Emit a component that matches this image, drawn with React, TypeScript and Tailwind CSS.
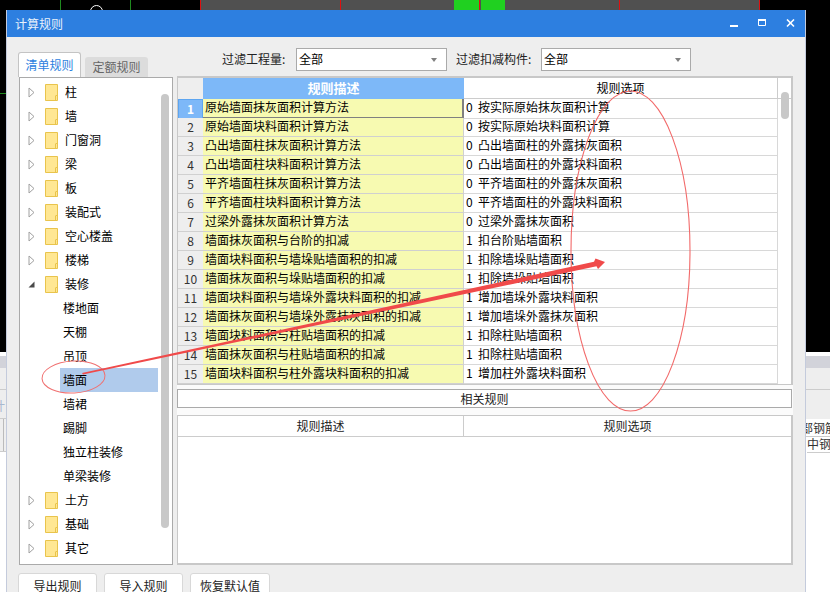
import * as React from "react"

const font = { fontFamily: '"Noto Sans CJK SC", "Liberation Sans", sans-serif' }

const treeItems = [
  { label: "柱", kind: "closed" },
  { label: "墙", kind: "closed" },
  { label: "门窗洞", kind: "closed" },
  { label: "梁", kind: "closed" },
  { label: "板", kind: "closed" },
  { label: "装配式", kind: "closed" },
  { label: "空心楼盖", kind: "closed" },
  { label: "楼梯", kind: "closed" },
  { label: "装修", kind: "open" },
  { label: "楼地面", kind: "child" },
  { label: "天棚", kind: "child" },
  { label: "吊顶", kind: "child" },
  { label: "墙面", kind: "selected" },
  { label: "墙裙", kind: "child" },
  { label: "踢脚", kind: "child" },
  { label: "独立柱装修", kind: "child" },
  { label: "单梁装修", kind: "child" },
  { label: "土方", kind: "closed" },
  { label: "基础", kind: "closed" },
  { label: "其它", kind: "closed" },
]

const rules = [
  ["原始墙面抹灰面积计算方法", "0", "按实际原始抹灰面积计算"],
  ["原始墙面块料面积计算方法", "0", "按实际原始块料面积计算"],
  ["凸出墙面柱抹灰面积计算方法", "0", "凸出墙面柱的外露抹灰面积"],
  ["凸出墙面柱块料面积计算方法", "0", "凸出墙面柱的外露块料面积"],
  ["平齐墙面柱抹灰面积计算方法", "0", "平齐墙面柱的外露抹灰面积"],
  ["平齐墙面柱块料面积计算方法", "0", "平齐墙面柱的外露块料面积"],
  ["过梁外露抹灰面积计算方法", "0", "过梁外露抹灰面积"],
  ["墙面抹灰面积与台阶的扣减", "1", "扣台阶贴墙面积"],
  ["墙面块料面积与墙垛贴墙面积的扣减", "1", "扣除墙垛贴墙面积"],
  ["墙面抹灰面积与垛贴墙面积的扣减", "1", "扣除墙垛贴墙面积"],
  ["墙面块料面积与墙垛外露块料面积的扣减", "1", "增加墙垛外露块料面积"],
  ["墙面抹灰面积与墙垛外露抹灰面积的扣减", "1", "增加墙垛外露抹灰面积"],
  ["墙面块料面积与柱贴墙面积的扣减", "1", "扣除柱贴墙面积"],
  ["墙面抹灰面积与柱贴墙面积的扣减", "1", "扣除柱贴墙面积"],
  ["墙面块料面积与柱外露块料面积的扣减", "1", "增加柱外露块料面积"],
]

function Folder() {
  return (
    <svg width="13" height="17" viewBox="0 0 13 17" className="shrink-0">
      <path d="M0.5 0.5H12.5V16.5H0.5Z" fill="#ffe793" stroke="#e9c44c" />
      <path d="M10.5 11.5V16.5" stroke="#e9c44c" />
      <path d="M11 11.5H12" stroke="#e9c44c" />
    </svg>
  )
}

function Caret({ open }: { open: boolean }) {
  return open ? (
    <svg width="7" height="7" viewBox="0 0 7 7" className="shrink-0">
      <path d="M6.5 0.5V6.5H0.5Z" fill="#4a4a4a" />
    </svg>
  ) : (
    <svg width="7" height="11" viewBox="0 0 7 11" className="shrink-0">
      <path d="M1 1L6 5.5L1 10Z" fill="#fff" stroke="#a0a0a0" />
    </svg>
  )
}

function FilterSelect({ width }: { width: string }) {
  return (
    <div className={`flex h-[23px] items-center justify-between border border-[#aaaaaa] bg-white pl-[2px] pr-[9px] text-[12px] text-black ${width}`}>
      <span className="pb-[2px]">全部</span>
      <span className="h-0 w-0 border-x-[3.5px] border-t-[4px] border-x-transparent border-t-[#808080]" />
    </div>
  )
}

function WindowButtons() {
  return (
    <svg width="66" height="9" viewBox="0 0 66 9" className="shrink-0">
      <path d="M0 6H8V8H0Z" fill="#fff" />
      <path d="M28.5 0.5H35.5V6.5H28.5Z" fill="none" stroke="#fff" />
      <path d="M28 0H36V2H28Z" fill="#fff" />
      <path d="M57 0.5L64 7.5M64 0.5L57 7.5" stroke="#fff" strokeWidth="1.6" />
    </svg>
  )
}

function BackgroundLayer() {
  return (
    <>
      <div className="absolute left-[60px] top-0 h-[10px] w-px bg-[#1f8a1f]" />
      <div className="absolute left-[130px] top-0 h-[10px] w-px bg-[#1f8a1f]" />
      <div className="absolute left-[90px] top-[5px] h-[10px] w-[13px] rounded-t-full border border-white" />
      <div className="absolute left-[200px] top-0 h-[10px] w-[560px] bg-[#505050]" />
      <div className="absolute left-[200px] top-0 h-[10px] w-px bg-[#e01010]" />
      <div className="absolute left-[340px] top-0 h-[10px] w-px bg-[#e01010]" />
      <div className="absolute left-[619px] top-0 h-[10px] w-px bg-[#e01010]" />
      <div className="absolute left-[759px] top-0 h-[10px] w-px bg-[#e01010]" />
      <div className="absolute left-[454px] top-0 h-[10px] w-[25px] bg-[#20d020]" />
      <div className="absolute left-[479px] top-0 h-[10px] w-px bg-[#e01010]" />
      <div className="absolute left-[481px] top-0 h-[10px] w-[24px] bg-[#20d020]" />
      <div className="absolute left-0 top-[93px] h-px w-[6px] bg-[#1f8a1f]" />
      <div className="absolute inset-x-0 top-[352px] h-[240px] bg-white" />
      <div className="absolute inset-x-0 top-[356px] h-[12px] bg-[#d2d3da]" />
      <div className="absolute inset-x-0 top-[368px] h-[21px] bg-[#eeeeee]" />
      <div className="absolute inset-x-0 top-[389px] h-[30px] border-t border-[#cccccc] bg-[#eeeeee]" />
      <div className="absolute left-0 top-[418px] h-[34px] w-[6px] border-y border-[#cccccc] bg-[#eeeeee]">
        <div className="ml-[3px] h-full w-px bg-[#bbbbbb]" />
      </div>
      <div className="absolute left-[-7px] top-[398px] text-[12px] leading-[16px] text-[#a9b8d0]">计</div>
      <div className="absolute left-[789px] top-[420px] h-[17px] w-[60px] whitespace-nowrap border-b border-[#cccccc] text-[12px] leading-[15px] text-[#333333]">
        底部钢筋
      </div>
      <div className="absolute left-[807px] top-[437px] h-[16px] w-[30px] whitespace-nowrap border-b border-[#cccccc] text-[12px] leading-[14px] text-[#333333]">
        中钢筋
      </div>
    </>
  )
}

function Annotations() {
  return (
    <svg width="830" height="592" viewBox="0 0 830 592" className="pointer-events-none absolute left-0 top-0">
      <ellipse cx="630.5" cy="251" rx="59.5" ry="160" fill="none" stroke="#f26a6a" strokeWidth="1.1" />
      <ellipse cx="73.5" cy="377" rx="31.5" ry="16" fill="none" stroke="#f07070" strokeWidth="1" transform="rotate(-3 73.5 377)" />
      <polygon points="82,373 594,261.8 595.5,258.5 605,262 598,269 596.5,266.2 83,374.6" fill="#f04a4a" />
    </svg>
  )
}

export default function App() {
  return (
    <div className="relative h-[592px] w-[830px] overflow-hidden bg-black" style={font}>
      <BackgroundLayer />

      <div className="absolute left-[6px] top-[10px] flex h-[600px] w-[800px] flex-col border-x border-[#c4cbdc] bg-[#eeeeee]">
        <div className="flex h-[27px] shrink-0 items-center justify-between bg-[#2d7fe0] pl-[8px] pr-[9px] text-[12px] text-[#e8f1fb]">
          <span>计算规则</span>
          <WindowButtons />
        </div>

        <div className="flex gap-[4px] pl-[11px] pt-[11px]">
          <div className="w-[155px] shrink-0 pt-[4px]">
            <div className="flex h-[25px] items-end gap-[4px] text-[12px]">
              <div className="flex h-[25px] w-[63px] items-center justify-center rounded-t-[3px] border border-b-0 border-[#c4c4c4] bg-white text-[#2d7fe0]">
                清单规则
              </div>
              <div className="flex h-[20px] w-[63px] items-center justify-center rounded-t-[3px] bg-[#dcdcdc] text-[#666666]">
                定额规则
              </div>
            </div>
            <div className="relative ml-px h-[488px] w-[154px] border border-[#aaaaaa] bg-white pt-[2px] text-[12px] text-black">
              {treeItems.map((item) =>
                item.kind === "closed" || item.kind === "open" ? (
                  <div key={item.label} className="flex h-[24px] items-center pl-[8px]">
                    <div className="flex w-[17px] items-center">
                      <Caret open={item.kind === "open"} />
                    </div>
                    <Folder />
                    <span className="ml-[7px]">{item.label}</span>
                  </div>
                ) : (
                  <div key={item.label} className="flex h-[24px] items-center pl-[40px]">
                    <div className={`flex h-[24px] w-[98px] items-center pl-[3px] ${item.kind === "selected" ? "bg-[#b0cbec]" : ""}`}>
                      {item.label}
                    </div>
                  </div>
                )
              )}
              <div className="absolute left-[141px] top-[16px] h-[434px] w-[8px] rounded-full bg-[#c8c8c8]" />
            </div>
          </div>

          <div className="w-[616px] shrink-0">
            <div className="flex h-[23px] items-center pl-[45px] text-[12px] text-[#222222]">
              <span className="w-[74px] pb-[2px]">过滤工程量:</span>
              <FilterSelect width="w-[151px]" />
              <span className="ml-[9px] w-[85px] pb-[2px]">过滤扣减构件:</span>
              <FilterSelect width="w-[150px]" />
            </div>

            <div className="relative mt-[5px] h-[309px] border-b border-l border-r-2 border-t-2 border-[#c8c8c8] bg-white text-[12px] text-black">
              <div className="grid h-[21px] grid-cols-[25px_261px_314px] border-b border-[#cccccc]">
                <div className="bg-[#eeeeee]" />
                <div className="flex items-center justify-center bg-[#7db8f8] pb-[2px] text-[13px] font-bold text-white">规则描述</div>
                <div className="flex items-center justify-center border-r border-[#cccccc] pb-[2px]">规则选项</div>
              </div>
              {rules.map((rule, index) => (
                <div key={rule[0] + index} className="grid h-[19px] grid-cols-[25px_261px_314px]">
                  <div
                    className={
                      index === 0
                        ? "flex items-center justify-center border border-[#5da5f0] bg-[#7db8f8] font-bold text-white"
                        : "flex items-center justify-center border-b border-[#d0d0d0] bg-[#eeeeee] text-[#333333]"
                    }
                  >
                    {index + 1}
                  </div>
                  <div
                    className={
                      index === 0
                        ? "overflow-hidden whitespace-nowrap border-b-2 border-r-2 border-[#808080] bg-[#f7fab1] pl-[2px] leading-[16px]"
                        : "overflow-hidden whitespace-nowrap border-b border-r border-[#d0d0d0] bg-[#f7fab1] pl-[2px] leading-[16px]"
                    }
                  >
                    {rule[0]}
                  </div>
                  <div className="flex border-b border-r border-[#d8d8d8] pl-[2px] leading-[16px]">
                    <span className="w-[12px]">{rule[1]}</span>
                    <span>{rule[2]}</span>
                  </div>
                </div>
              ))}
              <div className="absolute left-[603px] top-[14px] h-[27px] w-[8px] rounded-full bg-[#c8c8c8]" />
            </div>

            <div className="h-[30px] bg-[#fbfbfb] pt-[4px]">
              <div className="flex h-[19px] w-[615px] items-center justify-center border border-[#aaaaaa] bg-white text-[12px] text-[#222222]">
                相关规则
              </div>
            </div>

            <div className="h-[150px] border-b-2 border-l border-r-2 border-t border-[#c8c8c8] bg-white text-[12px] text-[#222222]">
              <div className="grid h-[21px] grid-cols-[286px_1fr] border-b border-[#cccccc]">
                <div className="flex items-center justify-center border-r border-[#cccccc]">规则描述</div>
                <div className="flex items-center justify-center">规则选项</div>
              </div>
            </div>
          </div>
        </div>

        <div className="mt-[8px] flex gap-[7px] pl-[11px] text-[12px] text-[#222222]">
          <button type="button" className="h-[26px] w-[79px] rounded-[3px] border border-[#d8d8d8] bg-white">导出规则</button>
          <button type="button" className="h-[26px] w-[79px] rounded-[3px] border border-[#d8d8d8] bg-white">导入规则</button>
          <button type="button" className="h-[26px] w-[80px] rounded-[3px] border border-[#d8d8d8] bg-white">恢复默认值</button>
        </div>
      </div>

      <Annotations />
    </div>
  )
}
